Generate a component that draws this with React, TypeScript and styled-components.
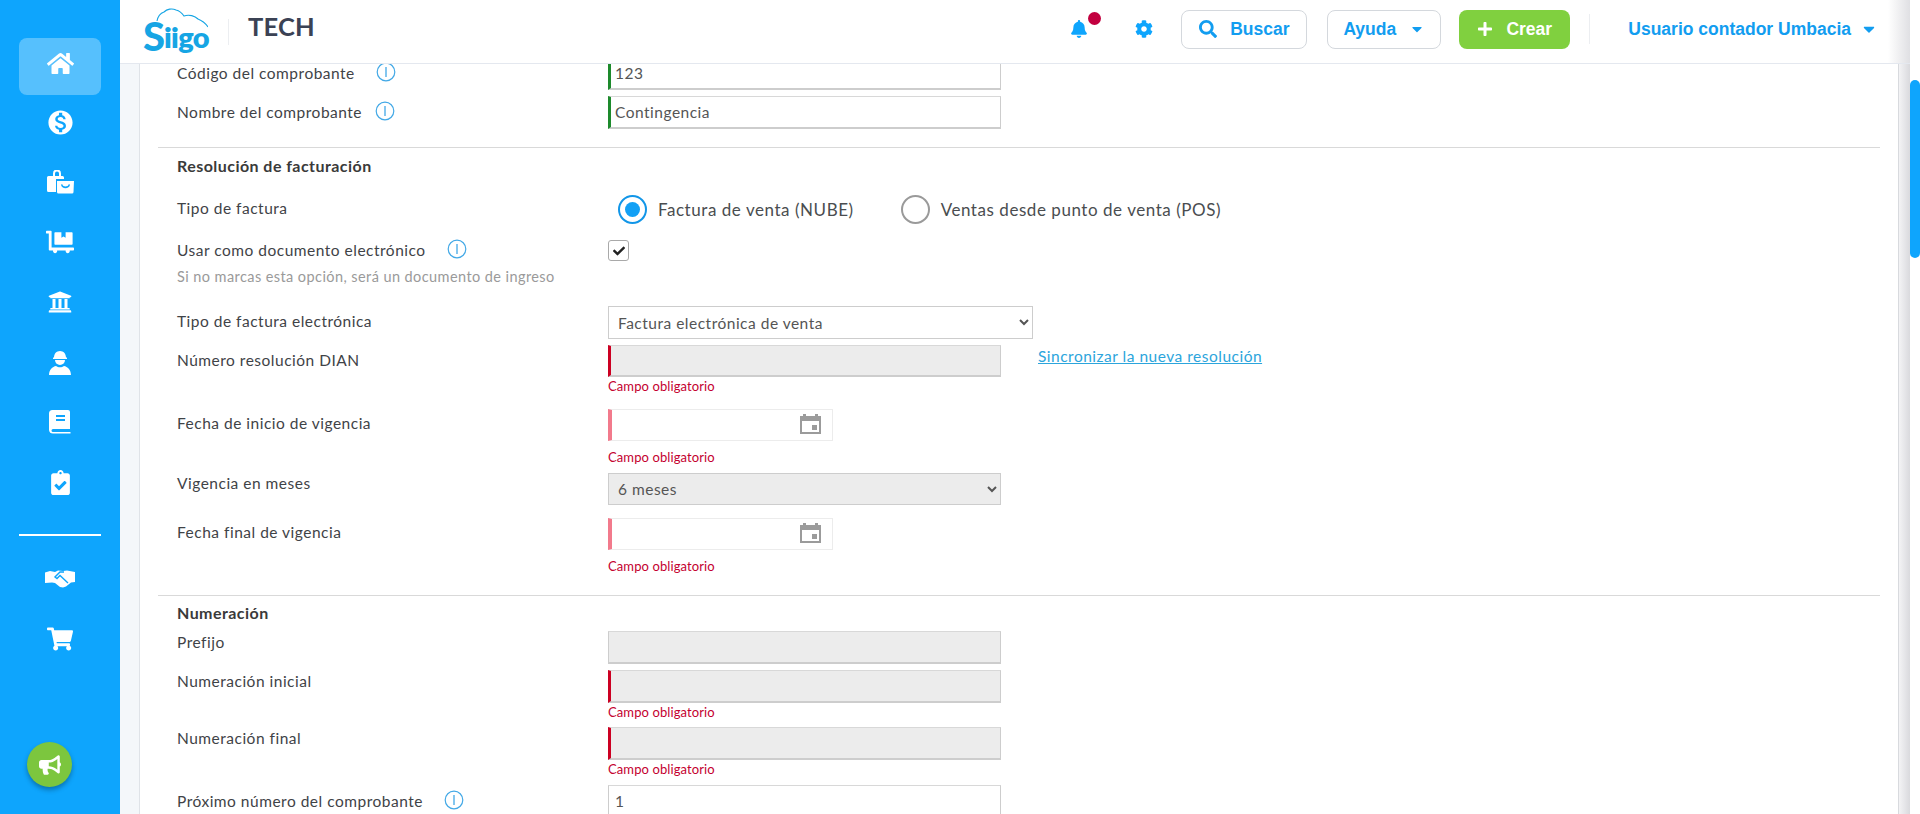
import React from "react";
import styled, { createGlobalStyle } from "styled-components";
import {
  FaHome, FaDollyFlatbed, FaUniversity, FaClipboardCheck, FaShoppingCart,
  FaBullhorn, FaBell, FaCog, FaSearch, FaPlus, FaCaretDown, FaCheck,
} from "react-icons/fa";
import { MdMonetizationOn } from "react-icons/md";

const BLUE = "#0ea5fd";
const FONT = `Lato, "Open Sans", sans-serif`;

const Global = createGlobalStyle`
  html, body { margin: 0; padding: 0; height: 100%; overflow: hidden; background: #fff; }
  #root { height: 100%; }
  * { box-sizing: border-box; }
`;

const Page = styled.div`
  display: flex; height: 814px; width: 1920px; font-family: ${FONT}; color: #3f4347;
`;
const Sidebar = styled.nav`
  width: 120px; flex: none; background: ${BLUE}; display: flex; flex-direction: column;
  align-items: center; padding-top: 38px; position: relative;
`;
const NavItem = styled.div<{ $active?: boolean }>`
  width: 82px; height: ${(p) => (p.$active ? 57 : 60)}px; display: flex; align-items: center; justify-content: center;
  border-radius: 8px; color: #fff; flex: none;
  padding-bottom: ${(p) => (p.$active ? 7 : 0)}px;
  margin-bottom: ${(p) => (p.$active ? -3 : 0)}px;
  background: ${(p) => (p.$active ? "rgba(255,255,255,.3)" : "transparent")};
`;
const NavRule = styled.div`
  width: 82px; height: 2px; background: #fff; margin: 22px 0 13px; flex: none;
`;
const Fab = styled.div`
  position: absolute; left: 27px; top: 742px; width: 45px; height: 45px; border-radius: 50%;
  background: #7cc63e; color: #fff; display: flex; align-items: center; justify-content: center;
  box-shadow: 0 3px 5px rgba(0,0,0,.3);
`;
const Main = styled.div`
  flex: 1; min-width: 0; display: flex; flex-direction: column;
`;
const Header = styled.header`
  height: 64px; flex: none; background: #fff; border-bottom: 1px solid #e4e8ef; display: flex;
  align-items: center; padding: 0 0 0 23px; position: relative; z-index: 2;
  &::after {
    content: ""; position: absolute; right: 10px; top: 0; bottom: 0; width: 22px;
    background: linear-gradient(90deg, rgba(220,220,224,0), rgba(220,220,224,.9));
  }
`;
const Logo = styled.div`
  position: relative; width: 65px; height: 50px; flex: none;
`;
const LogoWord = styled.span`
  position: absolute; left: 0; top: 9px; font: 800 29px/42px "Lato", sans-serif; color: #16a5e4;
  letter-spacing: -.7px; white-space: nowrap;
`;
const LogoS = styled.span`
  font-size: 40px; font-weight: 900; letter-spacing: -1px; line-height: 0; position: relative; top: 3px;
`;
const LogoCloud = styled.svg`
  position: absolute; left: 0; top: 0;
`;
const HeaderRule = styled.div`
  width: 1px; height: 26px; background: #eceef1; margin: 0 19px 0 20px;
`;
const Company = styled.div`
  font: 700 25.5px/30px ${FONT}; color: #3b4254; letter-spacing: .2px; margin-bottom: 11px;
`;
const HeaderRight = styled.div`
  margin-left: auto; display: flex; align-items: center; height: 100%; padding-bottom: 5px; padding-right: 42px;
`;
const IconSlot = styled.div<{ $ml?: number }>`
  position: relative; color: ${BLUE}; display: flex; align-items: center; margin-left: ${(p) => p.$ml ?? 0}px;
`;
const Dot = styled.span`
  position: absolute; width: 13px; height: 13px; border-radius: 50%; background: #c2003f; left: 18px; top: -8px;
`;
const HBtn = styled.div<{ $w: number; $ml: number; $green?: boolean }>`
  width: ${(p) => p.$w}px; height: 39px; margin-left: ${(p) => p.$ml}px; border-radius: 8px; display: flex; align-items: center; justify-content: center;
  gap: 13px; font: 700 17.5px/20px "Liberation Sans", sans-serif;
  color: ${(p) => (p.$green ? "#fff" : "#129df0")};
  background: ${(p) => (p.$green ? "#80d03f" : "#fff")};
  border: ${(p) => (p.$green ? "none" : "1px solid #d4d8dd")};
`;
const VRule = styled.div`
  width: 1px; height: 30px; background: #eceef1; margin: 0 38px 0 19px;
`;
const User = styled.div`
  display: flex; align-items: center; gap: 9px; font: 700 17.5px/20px "Liberation Sans", sans-serif; color: #129df0;
`;
const Body = styled.div`
  flex: 1; min-height: 0; display: flex; background: #f4f7fa; padding-left: 19px;
`;
const Card = styled.main`
  width: 1760px; flex: none; background: #fff; border-left: 1px solid #dfe3e8; border-right: 1px solid #d8dade;
  padding: 0 18px; overflow: hidden;
`;
const Shade = styled.div`
  width: 11px; flex: none; background: linear-gradient(90deg, #f3f3f5, #d9d9dd);
`;
const Track = styled.div`
  width: 10px; flex: none; background: #fff; margin-top: -64px; padding-top: 80px; position: relative; z-index: 3;
`;
const Thumb = styled.div`
  width: 10px; height: 178px; border-radius: 5px; background: ${BLUE};
`;
const Form = styled.div`
  margin-top: -7px; display: flex; flex-direction: column;
`;
const Row = styled.div<{ $mt: number }>`
  display: grid; grid-template-columns: 431px 1fr; padding-left: 19px; margin-top: ${(p) => p.$mt}px; flex: none;
`;
const LabelCell = styled.div<{ $pt: number }>`
  padding-top: ${(p) => p.$pt}px; display: flex; flex-direction: column;
`;
const LabelLine = styled.div`
  display: flex; align-items: center; font-size: 15.5px; line-height: 20px; letter-spacing: .5px; color: #3f4347; height: 20px;
`;
const Help = styled.div`
  margin-top: 7px; font-size: 14.5px; line-height: 20px; color: #9a9a9a; letter-spacing: .42px;
`;
const Info = styled.svg<{ $ml: number }>`
  margin-left: ${(p) => p.$ml}px; flex: none; margin-top: -2px;
`;
const Rule = styled.hr<{ $mt: number }>`
  margin: ${(p) => p.$mt}px 0 0; border: 0; height: 1px; background: #d9d9d9; flex: none;
`;
const Heading = styled.div<{ $mt: number }>`
  margin-top: ${(p) => p.$mt}px; padding-left: 19px; font-size: 16px; font-weight: 700; line-height: 20px; letter-spacing: .45px; color: #3a3a3a;
`;
const Control = styled.div`
  display: flex; flex-direction: column; align-items: flex-start;
`;
const ControlLine = styled.div`
  display: flex; align-items: flex-start;
`;
const TextInput = styled.input<{ $state?: "ok" | "err"; $off?: boolean; $h?: number }>`
  width: 393px; height: ${(p) => p.$h ?? 33}px; padding: 0 0 0 4px; margin: 0; outline: none;
  font: 15.5px ${FONT}; letter-spacing: .5px; color: #555;
  background: ${(p) => (p.$off ? "#ececec" : "#fff")};
  border: 1px solid #cdcdcd; border-top-color: #d8d8d8; border-bottom-width: 2px; border-radius: 0;
  border-left: 3px solid ${(p) => (p.$state === "ok" ? "#1d8a2c" : p.$state === "err" ? "#cc0022" : "#cdcdcd")};
  ${(p) => (p.$state ? "" : "border-left-width: 1px; padding-left: 6px;")}
`;
const Select = styled.select<{ $w: number; $off?: boolean }>`
  width: ${(p) => p.$w}px; height: ${(p) => (p.$off ? 32 : 33)}px; padding: 0 0 0 5px; margin: 0; outline: none;
  font: 15.5px ${FONT}; letter-spacing: .5px; color: #555; opacity: 1;
  background-color: ${(p) => (p.$off ? "#ececec" : "#fff")};
  border: 1px solid #cdcdcd; border-radius: 0;
`;
const DateBox = styled.div`
  width: 225px; height: 32px; display: flex; align-items: center; justify-content: flex-end; padding: 0 11px 3px 0;
  background: #fff; border: 1px solid #ececec; border-left: 4px solid #f27a8c;
`;
const ErrorText = styled.div<{ $mt?: number }>`
  margin-top: ${(p) => p.$mt ?? 1}px; font-size: 13px; line-height: 16px; color: #c4002f; letter-spacing: .1px;
`;
const LinkText = styled.a`
  margin: 1px 0 0 37px; font-size: 15.5px; line-height: 20px; letter-spacing: .5px; color: #2ca5dc; text-decoration: underline;
`;
const Radios = styled.div`
  display: flex; align-items: center; height: 29px; margin-left: 10px;
`;
const Radio = styled.span<{ $on?: boolean }>`
  width: 29px; height: 29px; border-radius: 50%; flex: none; display: flex; align-items: center; justify-content: center;
  border: 2px solid ${(p) => (p.$on ? "#1296e8" : "#9a9a9a")};
  &::after { content: ""; width: 15px; height: 15px; border-radius: 50%; background: ${(p) => (p.$on ? "#12a0f5" : "transparent")}; }
`;
const RadioText = styled.span<{ $mr?: number }>`
  margin-left: 11px; margin-right: ${(p) => p.$mr ?? 0}px; font-size: 17px; line-height: 22px; letter-spacing: .55px; color: #4a4d50;
`;
const Check = styled.span`
  width: 21px; height: 21px; border: 1px solid #a9a9a9; border-radius: 3px; display: flex; align-items: center; justify-content: center;
  color: #222; background: #fff;
`;

const InfoIcon = ({ ml }: { ml: number }) => (
  <Info $ml={ml} width="20" height="20" viewBox="0 0 20 20" fill="none" stroke="#42a8e6">
    <circle cx="10" cy="10" r="8.8" strokeWidth="1.2" />
    <path d="M10 5v10" strokeWidth="1.3" />
  </Info>
);

const CalendarIcon = () => (
  <svg width="21" height="20" viewBox="0 0 21 20" fill="#9b9b9b">
    <path fillRule="evenodd" d="M3 0h3v2h9V0h3v2h3v18H0V2h3ZM2 7v11h17V7Zm10 4h5v5h-5Z" />
  </svg>
);

const BagIcon = () => (
  <svg width="27" height="24" viewBox="0 0 27 24" fill="#fff">
    <path d="M0 7.500a1.500 1.500 0 0 1 1.500-1.500H6V3.500a4 4 0 0 1 8 0V6h1.500A1.500 1.500 0 0 1 17 7.500V9H9v13H1.500A1.500 1.500 0 0 1 0 20.500ZM8 6h4V3.500a2 2 0 0 0-4 0Z" />
    <path d="M10 11h17l-.5 11a1.500 1.500 0 0 1-1.500 1.500H11.500A1.500 1.500 0 0 1 10 22Zm4 3.500c.5 5 8.500 5 9 0l-1.300-.2c-.6 3-5.800 3-6.400 0Z" fillRule="evenodd" />
  </svg>
);
const WorkerIcon = () => (
  <svg width="22" height="25" viewBox="0 0 22 25" fill="#fff">
    <path d="M5 7.500C5 3.800 7.500 1 11 1s6 2.800 6 6.500h1V9H4V7.500Z" />
    <path d="M6 10h10a5 5 0 0 1-10 0Z" />
    <path d="M0 25c0-5 3.500-8.500 7-9 1.200.8 2.500 1.300 4 1.300s2.800-.5 4-1.300c3.500.5 7 4 7 9Z" />
  </svg>
);
const BookIcon = () => (
  <svg width="22" height="25" viewBox="0 0 22 25" fill="#fff">
    <path fillRule="evenodd" d="M3.500 0H19a2 2 0 0 1 2 2v17H4a1.500 1.500 0 0 0 0 3h17.500v1.500H4A4 4 0 0 1 0 20V3.500A3.500 3.500 0 0 1 3.500 0ZM7 5v2h9V5Zm0 4v2h9V9Z" />
  </svg>
);
const HandshakeIcon = () => (
  <svg width="30" height="18" viewBox="0 0 30 18">
    <path fill="#fff" d="M0 2.500 5 1l5 1 3-1.500 5 .5 4-.5 8 1.500v10l-4 .5-5 4-3 1-3-.5-5-4-3-.5-7 .5Z" />
    <path fill="none" stroke={BLUE} strokeWidth="1.400" d="M19 2h-4l-5 5 2 1.500 3-3 8 7.500" />
  </svg>
);

const LogoMark = () => (
  <Logo>
    <LogoCloud width="65" height="30" viewBox="0 0 65 30" fill="none" stroke="#16a5e4" strokeWidth="1.100">
      <path d="M14 14C15 9 18 6 21 5 24 2 29 1 33 3 37 4 39 6 41 9 46 7 52 9 55 12 60 14 63 17 65 20" />
    </LogoCloud>
    <LogoWord><LogoS>S</LogoS>iigo</LogoWord>
  </Logo>
);

const App = () => (
  <Page>
    <Global />
    <Sidebar>
      <NavItem $active><FaHome size={27} /></NavItem>
      <NavItem><MdMonetizationOn size={29} /></NavItem>
      <NavItem><BagIcon /></NavItem>
      <NavItem><FaDollyFlatbed size={28} /></NavItem>
      <NavItem><FaUniversity size={24} /></NavItem>
      <NavItem><WorkerIcon /></NavItem>
      <NavItem><BookIcon /></NavItem>
      <NavItem><FaClipboardCheck size={25} /></NavItem>
      <NavRule />
      <NavItem><HandshakeIcon /></NavItem>
      <NavItem><FaShoppingCart size={26} /></NavItem>
      <Fab><FaBullhorn size={22} /></Fab>
    </Sidebar>
    <Main>
      <Header>
        <LogoMark />
        <HeaderRule />
        <Company>TECH</Company>
        <HeaderRight>
          <IconSlot><FaBell size={18} /><Dot /></IconSlot>
          <IconSlot $ml={47}><FaCog size={18} /></IconSlot>
          <HBtn $w={126} $ml={28}><FaSearch size={18} />Buscar</HBtn>
          <HBtn $w={114} $ml={20}>Ayuda<FaCaretDown size={16} /></HBtn>
          <HBtn $w={111} $ml={18} $green><FaPlus size={16} />Crear</HBtn>
          <VRule />
          <User>Usuario contador Umbacia<FaCaretDown size={18} /></User>
        </HeaderRight>
      </Header>
      <Body>
        <Card>
          <Form>
            <Row $mt={0}>
              <LabelCell $pt={6}><LabelLine>Código del comprobante<InfoIcon ml={21} /></LabelLine></LabelCell>
              <Control><TextInput $state="ok" readOnly defaultValue="123" /></Control>
            </Row>
            <Row $mt={6}>
              <LabelCell $pt={6}><LabelLine>Nombre del comprobante<InfoIcon ml={13} /></LabelLine></LabelCell>
              <Control><TextInput $state="ok" readOnly defaultValue="Contingencia" /></Control>
            </Row>
            <Rule $mt={18} />
            <Heading $mt={8}>Resolución de facturación</Heading>
            <Row $mt={19}>
              <LabelCell $pt={3}><LabelLine>Tipo de factura</LabelLine></LabelCell>
              <Radios>
                <Radio $on />
                <RadioText $mr={47}>Factura de venta (NUBE)</RadioText>
                <Radio />
                <RadioText>Ventas desde punto de venta (POS)</RadioText>
              </Radios>
            </Row>
            <Row $mt={16}>
              <LabelCell $pt={0}>
                <LabelLine>Usar como documento electrónico<InfoIcon ml={21} /></LabelLine>
                <Help>Si no marcas esta opción, será un documento de ingreso</Help>
              </LabelCell>
              <Control><Check><FaCheck size={12} /></Check></Control>
            </Row>
            <Row $mt={19}>
              <LabelCell $pt={5}><LabelLine>Tipo de factura electrónica</LabelLine></LabelCell>
              <Control>
                <Select $w={425} defaultValue="a"><option value="a">Factura electrónica de venta</option></Select>
              </Control>
            </Row>
            <Row $mt={6}>
              <LabelCell $pt={5}><LabelLine>Número resolución DIAN</LabelLine></LabelCell>
              <Control>
                <ControlLine>
                  <TextInput $state="err" $off $h={32} readOnly />
                  <LinkText>Sincronizar la nueva resolución</LinkText>
                </ControlLine>
                <ErrorText>Campo obligatorio</ErrorText>
              </Control>
            </Row>
            <Row $mt={15}>
              <LabelCell $pt={4}><LabelLine>Fecha de inicio de vigencia</LabelLine></LabelCell>
              <Control>
                <DateBox><CalendarIcon /></DateBox>
                <ErrorText $mt={8}>Campo obligatorio</ErrorText>
              </Control>
            </Row>
            <Row $mt={8}>
              <LabelCell $pt={0}><LabelLine>Vigencia en meses</LabelLine></LabelCell>
              <Control>
                <Select $w={393} $off disabled defaultValue="6"><option value="6">6 meses</option></Select>
              </Control>
            </Row>
            <Row $mt={13}>
              <LabelCell $pt={4}><LabelLine>Fecha final de vigencia</LabelLine></LabelCell>
              <Control>
                <DateBox><CalendarIcon /></DateBox>
                <ErrorText $mt={8}>Campo obligatorio</ErrorText>
              </Control>
            </Row>
            <Rule $mt={21} />
            <Heading $mt={7}>Numeración</Heading>
            <Row $mt={8}>
              <LabelCell $pt={1}><LabelLine>Prefijo</LabelLine></LabelCell>
              <Control><TextInput $off readOnly /></Control>
            </Row>
            <Row $mt={6}>
              <LabelCell $pt={1}><LabelLine>Numeración inicial</LabelLine></LabelCell>
              <Control>
                <TextInput $state="err" $off readOnly />
                <ErrorText>Campo obligatorio</ErrorText>
              </Control>
            </Row>
            <Row $mt={7}>
              <LabelCell $pt={1}><LabelLine>Numeración final</LabelLine></LabelCell>
              <Control>
                <TextInput $state="err" $off readOnly />
                <ErrorText>Campo obligatorio</ErrorText>
              </Control>
            </Row>
            <Row $mt={8}>
              <LabelCell $pt={6}><LabelLine>Próximo número del comprobante<InfoIcon ml={21} /></LabelLine></LabelCell>
              <Control><TextInput readOnly defaultValue="1" /></Control>
            </Row>
          </Form>
        </Card>
        <Shade />
        <Track><Thumb /></Track>
      </Body>
    </Main>
  </Page>
);

export default App;
